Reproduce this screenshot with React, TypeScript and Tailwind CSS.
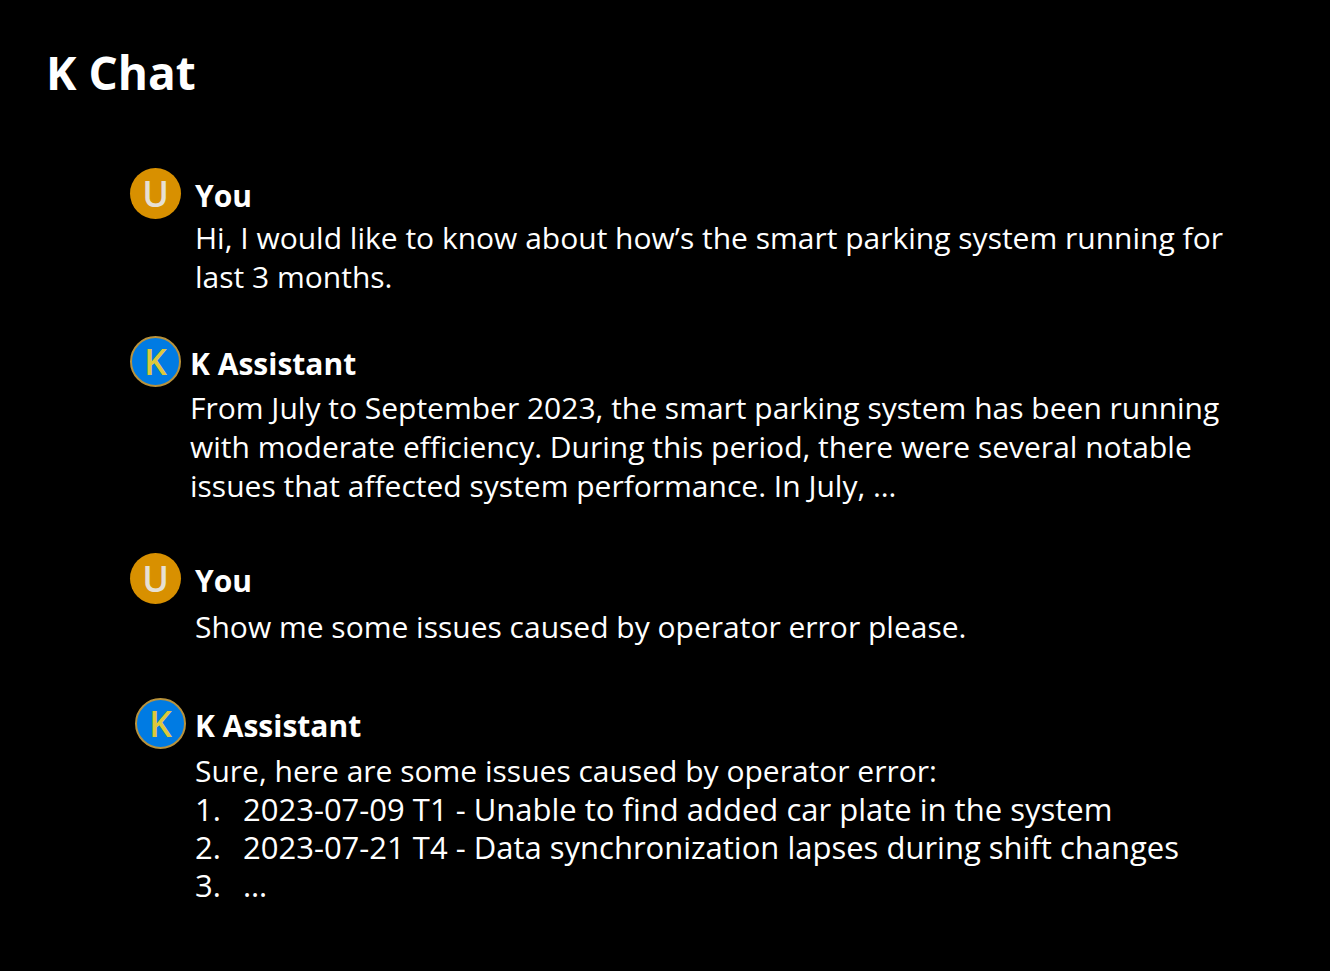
import React from "react";

type Message = {
  name: string;
  role: "user" | "assistant";
  row: string;
  body: string;
  text: string;
  items?: string[];
};

const messages: Message[] = [
  {
    name: "You",
    role: "user",
    row: "mt-[66px] gap-[14px]",
    body: "mt-0.5 leading-[39px]",
    text: "Hi, I would like to know about how’s the smart parking system running for last 3 months.",
  },
  {
    name: "K Assistant",
    role: "assistant",
    row: "mt-10 gap-[9px]",
    body: "mt-1 leading-[39px]",
    text: "From July to September 2023, the smart parking system has been running with moderate efficiency. During this period, there were several notable issues that affected system performance. In July, …",
  },
  {
    name: "You",
    role: "user",
    row: "mt-12 gap-[14px]",
    body: "mt-1.5 leading-[39px]",
    text: "Show me some issues caused by operator error please.",
  },
  {
    name: "K Assistant",
    role: "assistant",
    row: "mt-[52px] pl-[5px] gap-[9px]",
    body: "mt-1.5 leading-[38px]",
    text: "Sure, here are some issues caused by operator error:",
    items: [
      "2023-07-09 T1 - Unable to find added car plate in the system",
      "2023-07-21 T4 - Data synchronization lapses during shift changes",
      "…",
    ],
  },
];

const avatarStyles = {
  user: "bg-[#d89000] text-[#e6e0d4]",
  assistant: "border-2 border-[#b8923c] bg-[#007be3] text-[#dcc83c]",
};

function Avatar({ role }: { role: Message["role"] }) {
  return (
    <div
      className={`flex size-[51px] shrink-0 items-center justify-center rounded-full text-[36px] font-semibold ${avatarStyles[role]}`}
    >
      {role === "user" ? "U" : "K"}
    </div>
  );
}

export default function App() {
  return (
    <main className="min-h-screen bg-black pr-[72px] pl-[46px] pt-[42px] pb-10 font-['Open_Sans','Noto_Sans',sans-serif] text-white">
      <h1 className="text-[46px] leading-[60px] font-bold">K Chat</h1>
      <div className="pl-[84px]">
        {messages.map((m, i) => (
          <article key={i} className={`flex items-start ${m.row}`}>
            <Avatar role={m.role} />
            <div className="min-w-0 flex-1 pt-2">
              <h2 className="text-[30px] leading-[40px] font-bold">{m.name}</h2>
              <div className={`text-[30px] ${m.body}`}>
                <p>{m.text}</p>
                {m.items && (
                  <ol className="text-[31px]">
                    {m.items.map((item, n) => (
                      <li key={item} className="flex">
                        <span className="w-12 shrink-0">{n + 1}.</span>
                        <span>{item}</span>
                      </li>
                    ))}
                  </ol>
                )}
              </div>
            </div>
          </article>
        ))}
      </div>
    </main>
  );
}
